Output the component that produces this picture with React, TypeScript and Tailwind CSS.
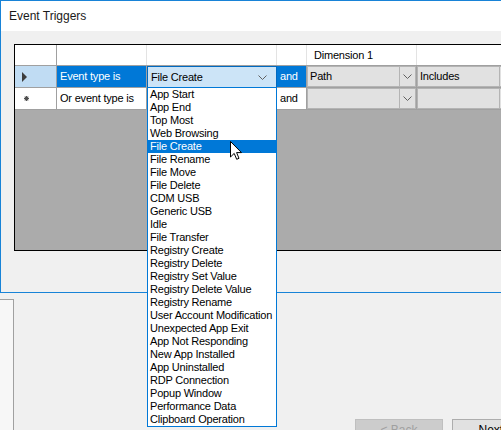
import React from "react";

const eventTypes = [
  "App Start",
  "App End",
  "Top Most",
  "Web Browsing",
  "File Create",
  "File Rename",
  "File Move",
  "File Delete",
  "CDM USB",
  "Generic USB",
  "Idle",
  "File Transfer",
  "Registry Create",
  "Registry Delete",
  "Registry Set Value",
  "Registry Delete Value",
  "Registry Rename",
  "User Account Modification",
  "Unexpected App Exit",
  "App Not Responding",
  "New App Installed",
  "App Uninstalled",
  "RDP Connection",
  "Popup Window",
  "Performance Data",
  "Clipboard Operation",
];

const Chevron = () => (
  <svg width="9" height="5" viewBox="0 0 9 5" className="shrink-0">
    <path d="M0.5 0.5 L4.5 4.5 L8.5 0.5" fill="none" stroke="#606060" strokeWidth="1" />
  </svg>
);

// grey combo cell like the Path / Includes columns
const GrayCombo = ({ value, width }: { value?: string; width: string }) => (
  <div className={`${width} h-full shrink-0 border-r border-[#a0a0a0]`}>
    <div className="h-full flex border border-[#b4b4b4] bg-[#e1e1e1]">
      <div className="flex-1 flex items-center pl-[2px] text-black">{value}</div>
      <div className="w-[16px] flex items-center justify-center border-l border-[#b4b4b4]">
        <Chevron />
      </div>
    </div>
  </div>
);

export default function App() {
  return (
    <div className="relative w-[501px] h-[430px] overflow-hidden bg-[#f0f0f0] font-['Liberation_Sans',Arial,sans-serif] text-[11px] leading-[13px] tracking-[-0.2px] text-black">
      {/* wizard behind the dialog */}
      <div className="flex h-full">
        <div className="w-[14px] shrink-0 pt-[299px]">
          <div className="h-full bg-[#f7f7f7] border-t border-r border-[#a0a0a0]" />
        </div>
        <div className="flex-1 pt-[419px] pl-[341px] flex gap-[9px]">
          <div className="w-[88px] h-[23px] shrink-0 bg-[#cccccc] border border-[#bfbfbf] flex items-center justify-center text-[#a0a0a0] text-[12px] tracking-normal">
            &lt; Back
          </div>
          <div className="w-[88px] h-[23px] shrink-0 bg-[#e1e1e1] border border-[#adadad] flex items-center justify-center text-[12px] tracking-normal">
            Next &gt;
          </div>
        </div>
      </div>

      {/* dialog window */}
      <div className="absolute left-0 top-0 w-[540px] h-[293px] border-t border-l border-b border-[#1883d7] bg-[#f0f0f0] flex flex-col">
        <div className="h-[30px] bg-white flex items-center pl-[8px] text-[12px] tracking-normal text-[#1a1a1a]">
          Event Triggers
        </div>
        <div className="flex-1 pt-[13px] pl-[13px]">
          <div className="w-[600px] h-[207px] border border-black bg-[#ababab]">
            {/* header */}
            <div className="flex h-[21px] bg-white border-b border-[#a0a0a0]">
              <div className="w-[42px] shrink-0 border-r border-[#a0a0a0]" />
              <div className="w-[90px] shrink-0 border-r border-[#e3e3e3]" />
              <div className="w-[130px] shrink-0 border-r border-[#e3e3e3]" />
              <div className="w-[30px] shrink-0 border-r border-[#e3e3e3]" />
              <div className="w-[110px] shrink-0 border-r border-[#e3e3e3] flex items-center pl-[7px]">
                Dimension 1
              </div>
              <div className="flex-1" />
            </div>
            {/* row 1 */}
            <div className="flex h-[22px] border-b border-[#a0a0a0]">
              <div className="w-[42px] shrink-0 border-r border-[#a0a0a0] bg-[#c0dcf3] flex items-center pl-[7px]">
                <svg width="5" height="10" viewBox="0 0 5 10">
                  <path d="M0 0 L5 5 L0 10 Z" fill="#3c3c3c" />
                </svg>
              </div>
              <div className="w-[90px] shrink-0 border-r border-[#a0a0a0] bg-[#0078d7] text-white flex items-center pl-[3px]">
                Event type is
              </div>
              <div className="w-[130px] shrink-0 -mb-px border border-[#0069c0] bg-[#cce4f7] flex items-center pl-[3px] pr-[9px]">
                <span className="flex-1">File Create</span>
                <Chevron />
              </div>
              <div className="w-[30px] shrink-0 border-r border-[#a0a0a0] bg-[#0078d7] text-white flex items-center pl-[3px]">
                and
              </div>
              <GrayCombo value="Path" width="w-[110px]" />
              <GrayCombo value="Includes" width="w-[100px]" />
            </div>
            {/* row 2 */}
            <div className="flex h-[22px] border-b border-[#a0a0a0]">
              <div className="w-[42px] shrink-0 border-r border-[#a0a0a0] bg-white flex items-center pl-[9px]">
                <svg width="5" height="5" viewBox="0 0 5 5">
                  <path d="M2.5 0 V5 M0 2.5 H5 M0.7 0.7 L4.3 4.3 M4.3 0.7 L0.7 4.3" stroke="#505050" strokeWidth="1.1" />
                </svg>
              </div>
              <div className="w-[90px] shrink-0 border-r border-[#a0a0a0] bg-white flex items-center pl-[3px]">
                Or event type is
              </div>
              <div className="w-[130px] shrink-0 border-r border-[#a0a0a0] bg-white" />
              <div className="w-[30px] shrink-0 border-r border-[#a0a0a0] bg-white flex items-center pl-[3px]">
                and
              </div>
              <GrayCombo width="w-[110px]" />
              <GrayCombo width="w-[100px]" />
            </div>
          </div>
        </div>
      </div>

      {/* open dropdown list */}
      <div className="absolute left-[147px] top-[87px] w-[130px] h-[340px] border border-[#0078d7] bg-white">
        {eventTypes.map((t) => (
          <div
            key={t}
            className={
              t === "File Create"
                ? "h-[13px] pl-[2px] whitespace-nowrap bg-[#0078d7] text-white"
                : "h-[13px] pl-[2px] whitespace-nowrap"
            }
          >
            {t}
          </div>
        ))}
      </div>

      {/* mouse pointer */}
      <svg className="absolute left-[230px] top-[141px]" width="13" height="20" viewBox="0 0 13 20">
        <path
          d="M0.5 0.5 L0.5 16 L4.2 12.4 L6.7 18.3 L9 17.3 L6.6 11.6 L11.5 11.6 Z"
          fill="white"
          stroke="black"
          strokeWidth="1"
          strokeLinejoin="miter"
        />
      </svg>
    </div>
  );
}
